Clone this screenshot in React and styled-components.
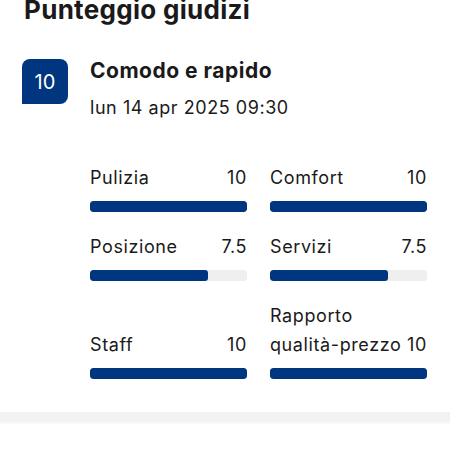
import React from "react";
import styled, { createGlobalStyle } from "styled-components";

const Global = createGlobalStyle`
  html, body { margin: 0; padding: 0; background: #fff; }
  body {
    font-family: Inter, "Liberation Sans", Arial, sans-serif;
    color: #1a1a1a;
    -webkit-font-smoothing: antialiased;
  }
`;

const Page = styled.div`
  width: 450px;
  height: 450px;
  overflow: hidden;
  background: #fff;
`;

const Title = styled.h2`
  margin: -5px 0 0 24px;
  font-size: 26px;
  line-height: 29px;
  font-weight: 700;
  letter-spacing: 0.3px;
`;

const Review = styled.section`
  display: flex;
  align-items: flex-start;
  gap: 22px;
  margin-top: 35px;
  padding-left: 22px;
`;

const Badge = styled.div`
  flex: none;
  width: 46px;
  height: 45px;
  background: #003580;
  color: #fff;
  border-radius: 8px 8px 8px 0;
  display: flex;
  align-items: center;
  justify-content: center;
  font-size: 20px;
  font-weight: 400;
`;

const Body = styled.div`
  flex: 1;
  padding-right: 23px;
`;

const Name = styled.div`
  font-size: 21px;
  line-height: 24px;
  font-weight: 700;
  letter-spacing: 0.5px;
`;

const Date = styled.div`
  margin-top: 13px;
  font-size: 18px;
  line-height: 24px;
  letter-spacing: 0.55px;
`;

const Grid = styled.div`
  display: grid;
  grid-template-columns: 157px 157px;
  column-gap: 23px;
  row-gap: 20px;
  margin-top: 43px;
`;

const Item = styled.div`
  display: flex;
  flex-direction: column;
  justify-content: flex-end;
`;

const Head = styled.div`
  display: flex;
  justify-content: space-between;
  align-items: flex-end;
  font-size: 18px;
  line-height: 29px;
  letter-spacing: 0.6px;
`;

const Label = styled.span`
  min-width: 0;
`;

const Value = styled.span`
  flex: none;
`;

const Track = styled.div`
  margin-top: 9px;
  height: 11px;
  border-radius: 3px;
  background: #efefef;
  overflow: hidden;
`;

const Fill = styled.div`
  height: 100%;
  border-radius: 3px;
  background: #003580;
`;

const Divider = styled.div`
  margin-top: 33px;
  height: 10px;
  background: #f2f2f2;
  border-bottom: 2px solid #f8f8f8;
`;

const scores = [
  ["Pulizia", "10", 10],
  ["Comfort", "10", 10],
  ["Posizione", "7.5", 7.5],
  ["Servizi", "7.5", 7.5],
  ["Staff", "10", 10],
  ["Rapporto qualità-prezzo", "10", 10],
];

export default function App() {
  return (
    <Page>
      <Global />
      <Title>Punteggio giudizi</Title>
      <Review>
        <Badge>10</Badge>
        <Body>
          <Name>Comodo e rapido</Name>
          <Date>lun 14 apr 2025 09:30</Date>
          <Grid>
            {scores.map(([label, text, v]) => (
              <Item key={label}>
                <Head>
                  <Label>{label}</Label>
                  <Value>{text}</Value>
                </Head>
                <Track>
                  <Fill style={{ width: `${v * 10}%` }} />
                </Track>
              </Item>
            ))}
          </Grid>
        </Body>
      </Review>
      <Divider />
    </Page>
  );
}
